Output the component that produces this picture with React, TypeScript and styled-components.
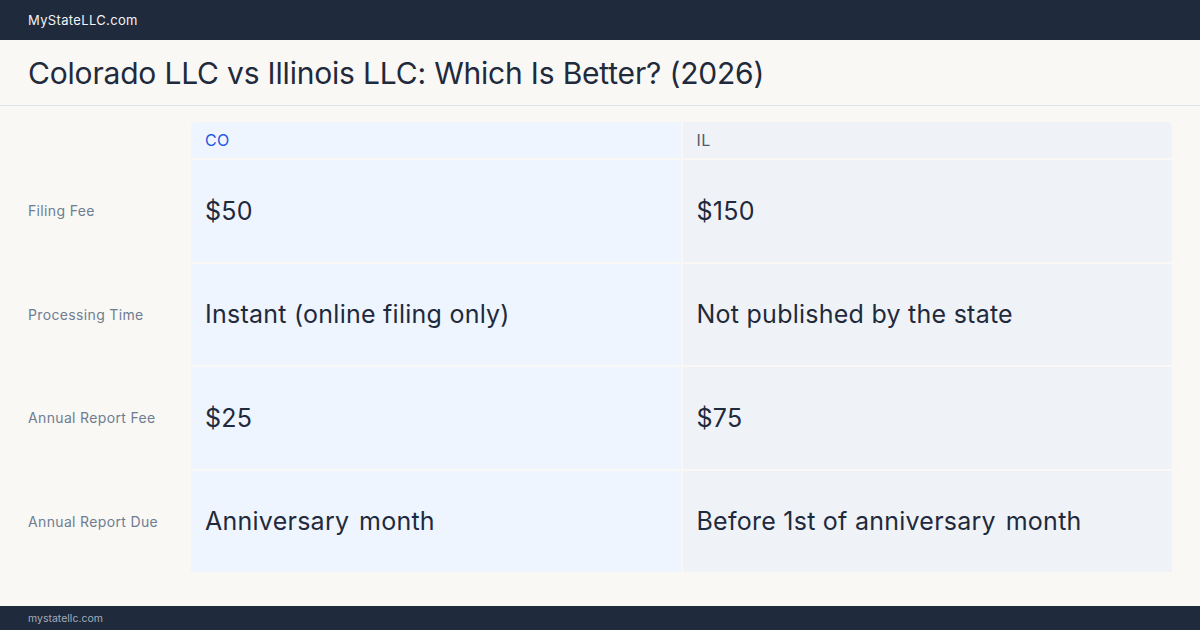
import styled, { createGlobalStyle } from "styled-components"
import { Fragment } from "react"

const Global = createGlobalStyle`
  html, body {
    margin: 0;
    padding: 0;
    background: #f9f8f5;
  }
  body {
    font-family: Inter, "Noto Sans", "Liberation Sans", sans-serif;
  }
`

const Page = styled.div`
  width: 1200px;
  height: 630px;
  display: flex;
  flex-direction: column;
  background: #f9f8f5;
  overflow: hidden;
`

const TopBar = styled.header`
  height: 40px;
  flex: none;
  background: #1f2a3c;
  display: flex;
  align-items: center;
  padding: 0 28px;
  color: #f1f3f6;
  font-size: 13px;
  letter-spacing: 0.35px;
`

const TitleBar = styled.div`
  height: 65px;
  flex: none;
  display: flex;
  align-items: center;
  padding: 0 28px;
  border-bottom: 1px solid #dde3ea;
`

const Title = styled.h1`
  margin: 0;
  font-size: 30px;
  font-weight: 400;
  color: #1f2a3c;
  letter-spacing: -0.19px;
`

const Main = styled.main`
  flex: 1;
  padding: 16px 28px 0;
`

const Grid = styled.div`
  height: 450px;
  display: grid;
  grid-template-columns: 161px 1fr 1fr;
  grid-template-rows: 36px repeat(4, 1fr);
  gap: 2px;
`

const Corner = styled.div``

const HeadCell = styled.div<{ $state: "co" | "il" }>`
  display: flex;
  align-items: center;
  padding: 0 14px;
  font-size: 16px;
  letter-spacing: 0.4px;
  background: ${(p) => (p.$state === "co" ? "#eef5ff" : "#eff3f8")};
  color: ${(p) => (p.$state === "co" ? "#2856e0" : "#4f5b6d")};
  border-radius: ${(p) => (p.$state === "co" ? "5px 0 0 0" : "0 5px 0 0")};
`

const Label = styled.div`
  display: flex;
  align-items: center;
  font-size: 14px;
  letter-spacing: 0.35px;
  color: #6f7d91;
`

const Cell = styled.div<{ $state: "co" | "il" }>`
  display: flex;
  align-items: center;
  padding: 0 14px;
  font-size: 25px;
  letter-spacing: 0.25px;
  color: #1f2a3c;
  white-space: pre;
  background: ${(p) => (p.$state === "co" ? "#eef5ff" : "#eff3f8")};
`

const Footer = styled.footer`
  height: 24px;
  flex: none;
  background: #1f2a3c;
  display: flex;
  align-items: center;
  padding: 0 28px;
  color: #a3adbb;
  font-size: 10.5px;
`

const rows = [
  { label: "Filing Fee", co: "$50", il: "$150" },
  { label: "Processing Time", co: "Instant (online filing only)", il: "Not published by the state" },
  { label: "Annual Report Fee", co: "$25", il: "$75" },
  { label: "Annual Report Due", co: "Anniversary \u200Amonth", il: "Before 1st of anniversary \u200Amonth" },
]

const App = () => {
  return (
    <Page>
      <Global />
      <TopBar>MyStateLLC.com</TopBar>
      <TitleBar>
        <Title>Colorado LLC vs Illinois LLC: Which Is Better? (2026)</Title>
      </TitleBar>
      <Main>
        <Grid>
          <Corner />
          <HeadCell $state="co">CO</HeadCell>
          <HeadCell $state="il">IL</HeadCell>
          {rows.map((r) => (
            <Fragment key={r.label}>
              <Label>{r.label}</Label>
              <Cell $state="co">{r.co}</Cell>
              <Cell $state="il">{r.il}</Cell>
            </Fragment>
          ))}
        </Grid>
      </Main>
      <Footer>mystatellc.com</Footer>
    </Page>
  )
}

export default App
